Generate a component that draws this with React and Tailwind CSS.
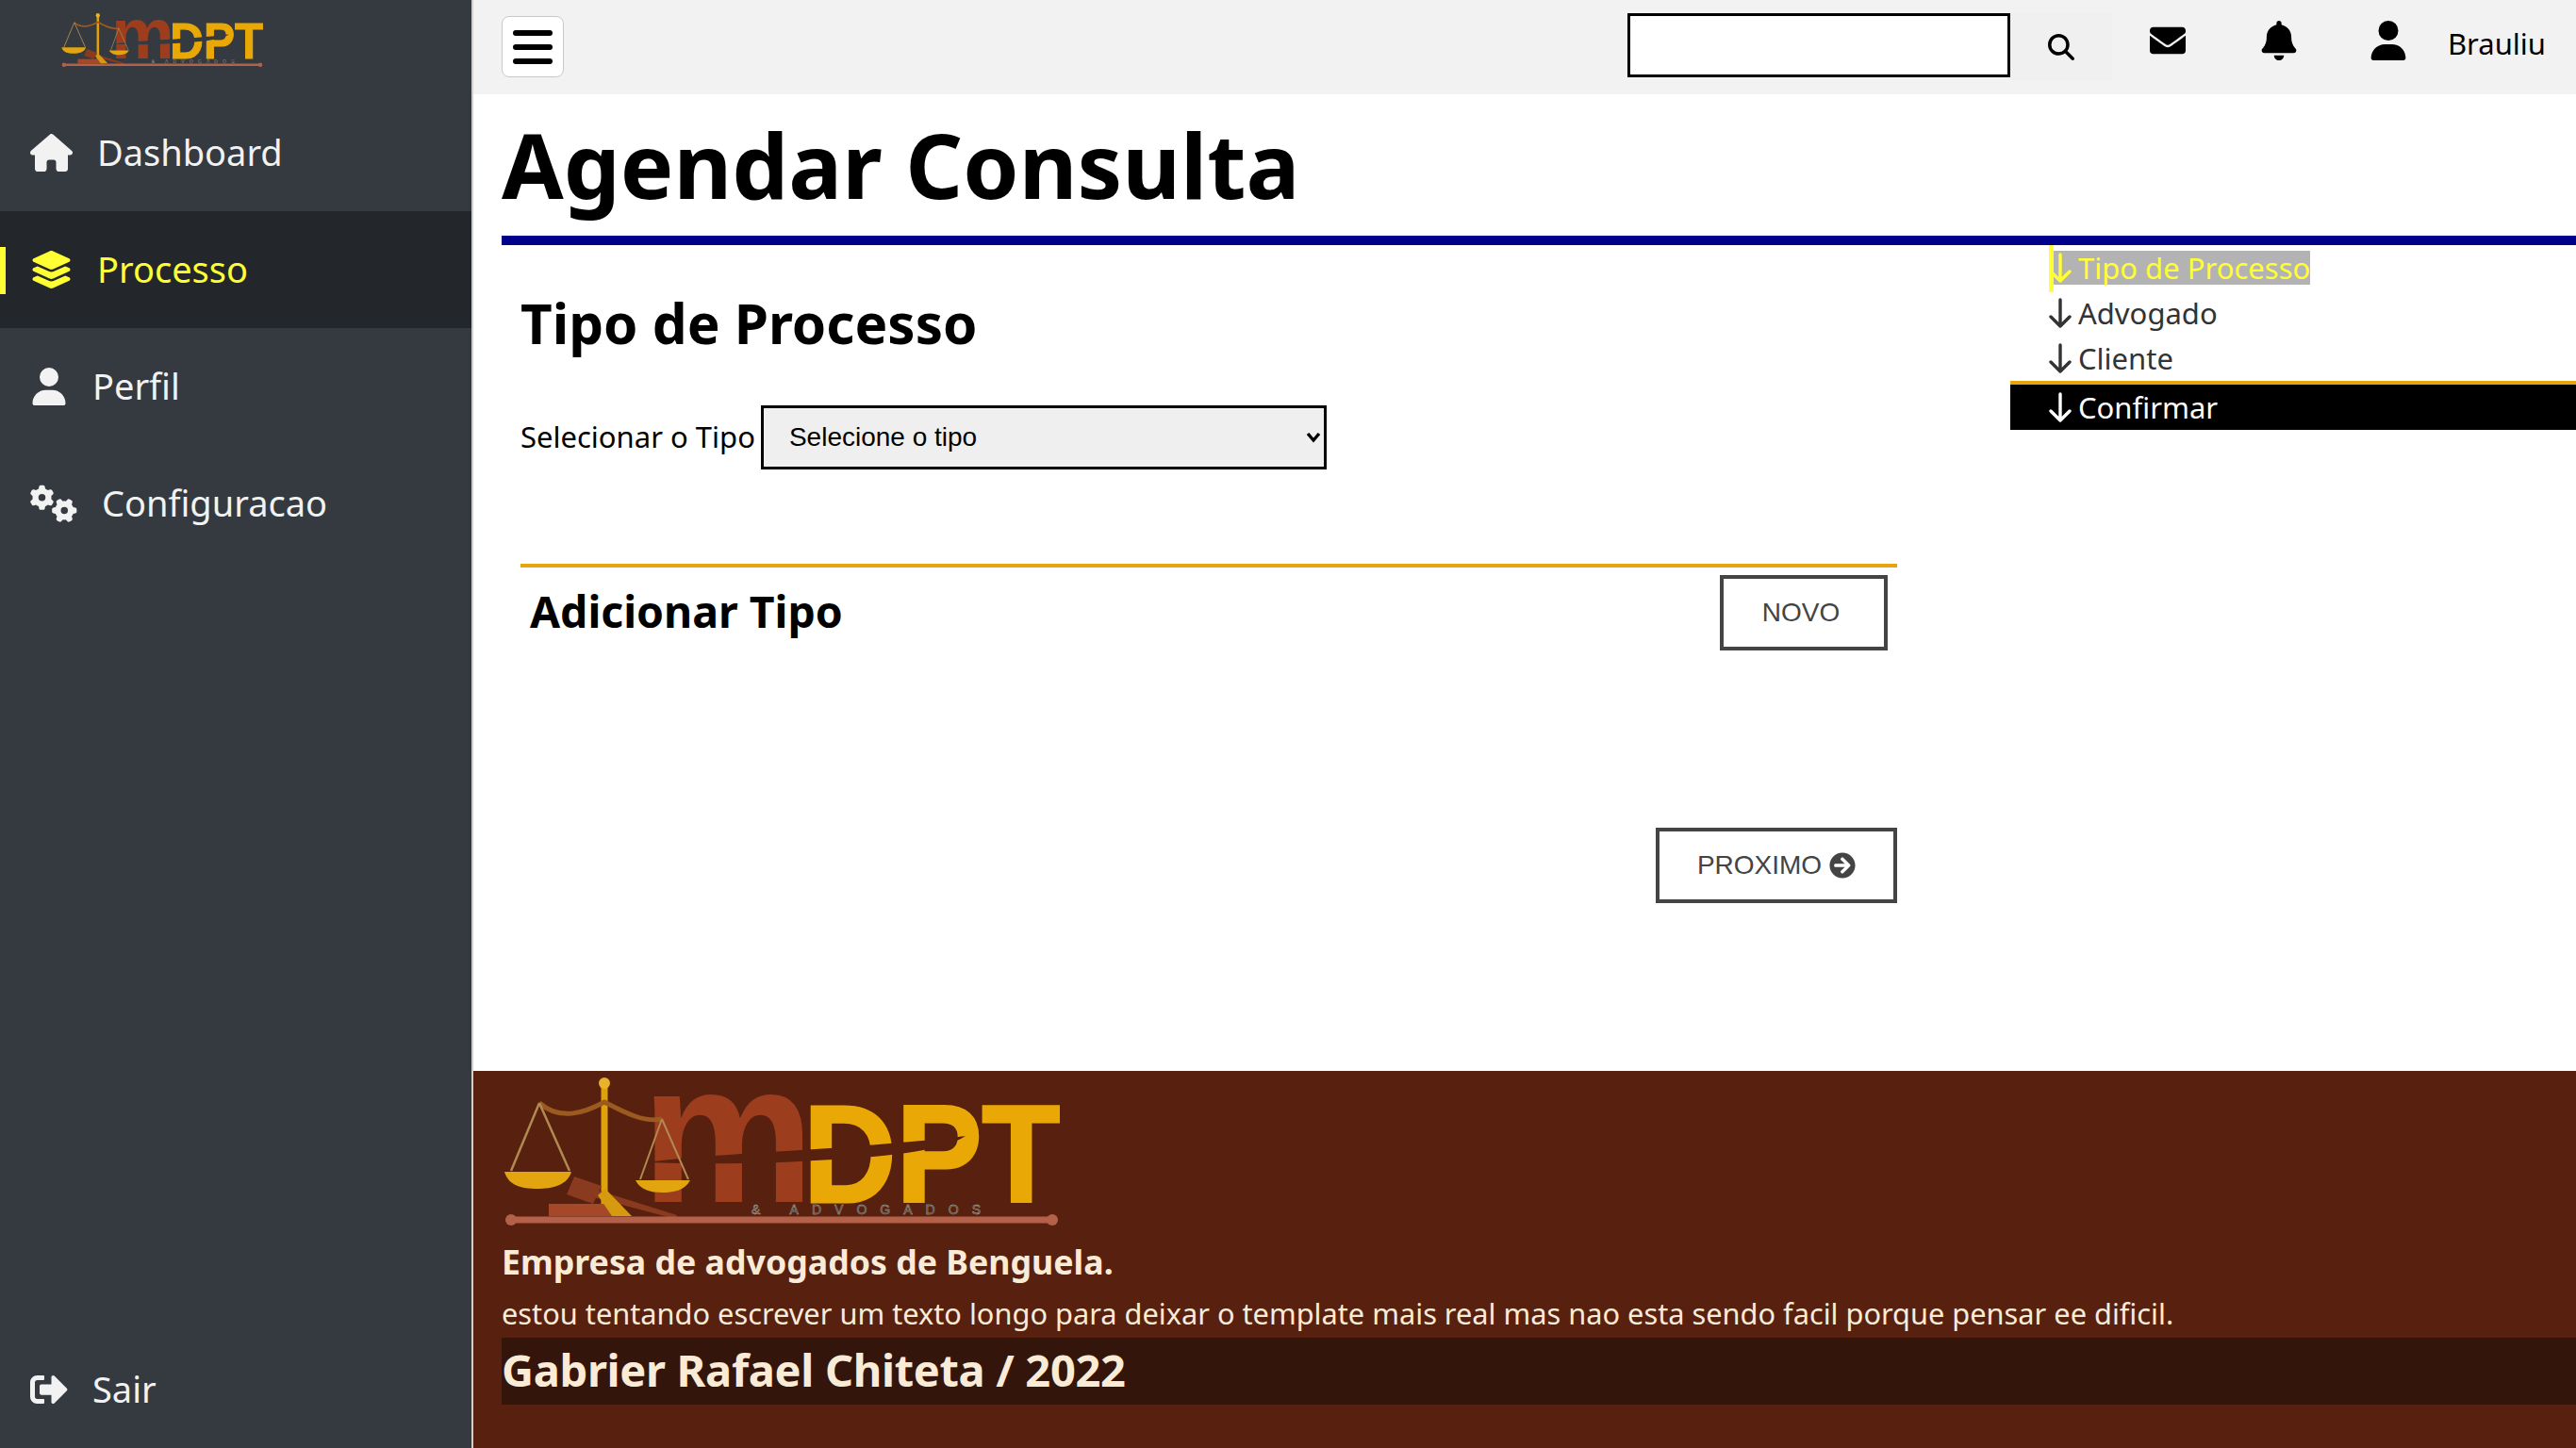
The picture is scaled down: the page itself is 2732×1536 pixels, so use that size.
import React from "react";
import { FaEnvelope, FaArrowCircleRight, FaSignOutAlt } from "react-icons/fa";
import { FaHouse, FaLayerGroup, FaUser, FaGears, FaBell, FaMagnifyingGlass } from "react-icons/fa6";

const UB = "font-['Noto_Sans','Open_Sans',sans-serif]";

function Logo({ bg, className }) {
  return (
    <svg viewBox="0 0 590 157" className={className}>
      {/* lettering */}
      <text x="146" y="132" fontFamily="Liberation Sans, sans-serif" fontWeight="700" fontSize="212" textLength="184" lengthAdjust="spacingAndGlyphs" fill="#9c3d1e">m</text>
      <text x="318" y="132" fontFamily="Liberation Sans, sans-serif" fontWeight="700" fontSize="146" textLength="273" lengthAdjust="spacingAndGlyphs" fill="#eaa806" stroke="#eaa806" strokeWidth="3">DPT</text>
      <path d="M150 90C250 78 350 78 490 62C470 76 420 84 330 88C270 92 210 92 150 90Z" fill={bg} />
      {/* stand and bar */}
      <path d="M107 4v130" stroke="#e0a20a" strokeWidth="7" />
      <circle cx="107" cy="6" r="6" fill="#e6b32a" />
      <path d="M38 27C60 46 85 38 107 26C130 38 150 48 168 44" stroke="#9a5a20" strokeWidth="5" fill="none" />
      <path d="M38 27L8 99M38 27L70 99" stroke="#b08a50" strokeWidth="2.5" fill="none" />
      <path d="M168 44L145 108M168 44L196 108" stroke="#b08a50" strokeWidth="2" fill="none" />
      <path d="M1 100H72C68 114 52 118 36 118C18 118 5 114 1 100Z" fill="#e2a40f" />
      <path d="M140 109H198C192 120 180 122 168 122C156 122 145 119 140 109Z" fill="#e2a40f" />
      {/* gavel */}
      <path d="M48 134H124V147H48Z" fill="#a5482a" />
      <path d="M75 105L104 115L95 134L67 124Z" fill="#8a3a1e" />
      <path d="M95 118L184 146L182 150L92 126Z" fill="#8a3a1e" />
      <path d="M108 118L136 147H115L100 125Z" fill="#d69a10" />
      <text x="263" y="145" fontFamily="Liberation Sans, sans-serif" fontSize="14" textLength="243" lengthAdjust="spacing" fill="#3a3a3a" stroke="#c8c0b0" strokeWidth="0.4">&amp; ADVOGADOS</text>
      <path d="M8 151H582" stroke="#b5614a" strokeWidth="7" />
      <circle cx="8" cy="151" r="6" fill="#b5614a" />
      <circle cx="582" cy="151" r="6" fill="#b5614a" />
    </svg>
  );
}

function NavItem({ icon, label, active, textPad }) {
  return (
    <a className={`relative flex items-center h-[124px] pl-8 text-[38px] ${active ? "bg-[#23272b] text-[#ffff33]" : "text-[#f2f2f2]"}`}>
      {active && <span className="absolute left-0 top-[38px] w-[6px] h-[50px] bg-[#ffff33]" />}
      {icon}
      <span className={`${textPad} relative -top-[1px]`}>{label}</span>
    </a>
  );
}

function Arrow() {
  return (
    <svg viewBox="0 0 24 32" className="w-[24px] h-[32px] shrink-0" fill="none" stroke="currentColor" strokeWidth="3.4" strokeLinecap="round" strokeLinejoin="round">
      <path d="M12 2v28M2 20l10 10 10-10" />
    </svg>
  );
}

function Step({ label, className }) {
  return (
    <div className={`flex items-center ${className}`}>
      <Arrow />
      <span className="ml-[7px]">{label}</span>
    </div>
  );
}

export default function App() {
  return (
    <div className={`flex w-[2732px] h-[1536px] overflow-hidden bg-white ${UB}`}>
      <aside className="flex flex-col justify-between w-[502px] shrink-0 bg-[#343a40] border-r-2 border-[#cfcfcf]">
        <div>
          <div className="h-[100px] pl-[65px] pt-[14px]">
            <Logo bg="#343a40" className="w-[214px] h-[57px]" />
          </div>
          <NavItem icon={<FaHouse className="w-[45px] h-[40px] shrink-0" />} label="Dashboard" textPad="ml-[26px]" />
          <NavItem active icon={<FaLayerGroup className="w-[45px] h-[42px] shrink-0" />} label="Processo" textPad="ml-[26px]" />
          <NavItem icon={<FaUser className="w-[40px] h-[40px] shrink-0" />} label="Perfil" textPad="ml-[26px]" />
          <NavItem icon={<FaGears className="w-[50px] h-[40px] shrink-0" />} label="Configuracao" textPad="ml-[26px]" />
        </div>
        <NavItem icon={<FaSignOutAlt className="w-[40px] h-[40px] shrink-0" />} label="Sair" textPad="ml-[26px]" />
      </aside>

      <div className="flex flex-col flex-1 min-w-0">
        <header className="flex items-start h-[100px] shrink-0 bg-[#f2f2f2] pl-[30px] pr-[32px]">
          <button className="flex items-center justify-center mt-[17px] w-[66px] h-[65px] bg-white border border-[#c8c8c8] rounded-lg text-black">
            <svg viewBox="0 0 42 36" className="w-[42px] h-[36px]" stroke="currentColor" strokeWidth="6" strokeLinecap="round">
              <path d="M3 3H39M3 18H39M3 33H39" />
            </svg>
          </button>
          <div className="ml-auto flex items-start mt-[14px]">
            <input className="w-[406px] h-[68px] bg-white border-[3px] border-black outline-none" />
            <button className="flex items-center justify-center w-[108px] h-[72px] bg-[#f0f0f0] text-black">
              <FaMagnifyingGlass className="w-[28px] h-[28px]" />
            </button>
          </div>
          <FaEnvelope className="ml-[38px] mt-[24px] w-[42px] h-[38px] text-black" />
          <FaBell className="ml-[78px] mt-[22px] w-[38px] h-[42px] text-black" />
          <FaUser className="ml-[78px] mt-[22px] w-[38px] h-[42px] text-black" />
          <span className="ml-[44px] mt-[24px] text-[31px] leading-[44px] text-black">Brauliu</span>
        </header>

        <main className="flex-1 pl-[30px]">
          <h1 className="h-[160px] border-b-[10px] border-[#00008b] text-[95px] leading-[148px] font-bold text-black">Agendar Consulta</h1>
          <div className="flex">
            <div className="w-[1600px] shrink-0 pl-[20px]">
              <h2 className="mt-[41px] text-[58.4px] leading-[84px] font-bold text-black">Tipo de Processo</h2>
              <div className="flex items-center mt-[45px]">
                <label className="text-[31px] leading-[46px] pb-[3px] text-black">Selecionar o Tipo</label>
                <div className="relative ml-[6px]">
                  <select className="block w-[600px] h-[68px] pl-[27px] bg-[#efefef] border-[3px] border-black font-['Liberation_Sans',sans-serif] text-[28px] text-black appearance-none">
                    <option>Selecione o tipo</option>
                  </select>
                  <svg viewBox="0 0 16 12" className="absolute right-[6px] top-[28px] w-[16px] h-[12px] text-black pointer-events-none" fill="none" stroke="currentColor" strokeWidth="3.4">
                    <path d="M2 2l6 7 6-7" />
                  </svg>
                </div>
              </div>
              <div className="mt-[100px] w-[1460px] border-t-4 border-[#e6a50a] pt-[8px] pr-[10px] pl-[10px] flex items-center justify-between">
                <h3 className="text-[46.4px] pb-[3px] font-bold text-black">Adicionar Tipo</h3>
                <button className="w-[178px] h-[80px] border-4 border-[#444] pr-[6px] font-['Liberation_Sans',sans-serif] text-[28px] text-[#444]">NOVO</button>
              </div>
              <div className="mt-[188px] w-[1460px] flex justify-end">
                <button className="flex items-center justify-center gap-[8px] w-[256px] h-[80px] border-4 border-[#444] font-['Liberation_Sans',sans-serif] text-[28px] text-[#444]">
                  PROXIMO <FaArrowCircleRight className="w-[28px] h-[28px]" />
                </button>
              </div>
            </div>
            <nav className="flex-1 text-[31px] text-[#333]">
              <div className="relative pl-[41px] pt-[6px] h-[48px]">
                <span className="absolute left-[41px] top-0 h-[50px] w-[5px] bg-[#ffff33]" />
                <Step label="Tipo de Processo" className="w-max bg-[#b3b3b3] text-[#ffff33] h-[36px]" />
              </div>
              <Step label="Advogado" className="pl-[41px] h-[48px]" />
              <Step label="Cliente" className="pl-[41px] h-[48px]" />
              <Step label="Confirmar" className="pl-[41px] h-[52px] border-t-4 border-[#e6a50a] bg-black text-white" />
            </nav>
          </div>
        </main>

        <footer className="h-[400px] shrink-0 bg-[#58200f] pl-[30px] pt-[7px] text-[#faebd7]">
          <Logo bg="#58200f" className="ml-[2px] w-[590px] h-[157px]" />
          <p className="mt-[10px] text-[35.7px] leading-[57px] font-bold">Empresa de advogados de Benguela.</p>
          <p className="text-[30.75px] leading-[52px]">estou tentando escrever um texto longo para deixar o template mais real mas nao esta sendo facil porque pensar ee dificil.</p>
          <p className="h-[71px] bg-[#33150b] text-[47px] leading-[69px] tracking-[-0.33px] font-bold">Gabrier Rafael Chiteta / 2022</p>
        </footer>
      </div>
    </div>
  );
}
